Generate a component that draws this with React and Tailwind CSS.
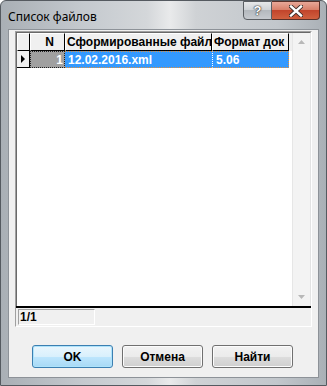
const font = { fontFamily: '"Liberation Sans", Arial, sans-serif' };

const HelpButton = () => (
  <div className="w-[29px] h-[19px] rounded-bl-[4px] border border-[#5a5e63] bg-[linear-gradient(180deg,#e6e8ea_0%,#cfd3d7_45%,#b4b9be_50%,#c6cacf_100%)] flex items-center justify-center">
    <span className="text-[13px] font-bold text-white leading-none [text-shadow:0_0_1px_#333,0_0_1px_#333,0_0_2px_#555]" style={font}>?</span>
  </div>
);

const CloseButton = () => (
  <div className="w-[48px] h-[19px] rounded-br-[4px] border border-l-0 border-[#5a3028] bg-[linear-gradient(180deg,#e8a898_0%,#d9806a_45%,#c2452c_50%,#d0603f_100%)] flex items-center justify-center">
    <svg width="14" height="12" viewBox="0 0 14 12">
      <path d="M2 1.5 L12 10.5 M12 1.5 L2 10.5" stroke="#3a2a26" strokeWidth="4.2" strokeLinecap="square" />
      <path d="M2 1.5 L12 10.5 M12 1.5 L2 10.5" stroke="#ffffff" strokeWidth="2.4" strokeLinecap="square" />
    </svg>
  </div>
);

const Btn = ({ children, primary }) => (
  <div
    className={`w-[81px] h-[23px] rounded-[3px] border flex items-center justify-center text-[12px] font-bold text-black ${
      primary
        ? 'border-[#3c7fb1] bg-[linear-gradient(180deg,#eaf6fd_0%,#d9f0fc_50%,#bee6fd_51%,#a7d9f5_100%)] shadow-[inset_0_0_0_1px_#aee3fb]'
        : 'border-[#707070] bg-[linear-gradient(180deg,#f2f2f2_0%,#ebebeb_50%,#dddddd_51%,#cfcfcf_100%)] shadow-[inset_0_0_0_1px_#fcfcfc]'
    }`}
    style={font}
  >
    {children}
  </div>
);

export default function App() {
  return (
    <div className="w-[327px] h-[386px] bg-white">
      <div className="w-[327px] h-[386px] flex flex-col rounded-t-[6px] border border-[#555a60] bg-[linear-gradient(90deg,#a9afb5_0%,#c4c9ce_25%,#d4d7da_45%,#e9eaeb_52%,#cfd2d5_60%,#c2c7cc_85%,#aab0b6_100%)]">
        <div className="h-[28px] flex items-start justify-between pl-[7px] pr-[6px] shrink-0">
          <div className="pt-[7px] text-[12px] text-black" style={{ fontFamily: '"Noto Sans", sans-serif' }}>Список файлов</div>
          <div className="flex">
            <HelpButton />
            <CloseButton />
          </div>
        </div>
        <div className="flex-1 mx-[7px] mb-[7px] border border-[#8d9298] bg-[#f0f0f0] flex flex-col">
          <div className="ml-[6px] mt-[1px] w-[297px] h-[296px] border-t border-l border-[#a0a0a0] border-r border-b border-r-white border-b-white flex flex-col">
            <div className="flex-1 border-t border-l border-[#696969] border-r border-r-[#e3e3e3] border-b-0 flex bg-white overflow-hidden">
              <div className="flex-1 flex flex-col">
                <div className="flex h-[18px] bg-[#f0f0f0] text-[12px] font-bold text-black" style={font}>
                  <div className="w-[13px] border-r border-b border-black border-t border-l border-t-white border-l-white" />
                  <div className="w-[35px] border-r border-b border-black border-t border-l border-t-white border-l-white flex items-center justify-end pr-[10px]">N</div>
                  <div className="w-[147px] border-r border-b border-black border-t border-l border-t-white border-l-white flex items-center pl-[1px] whitespace-nowrap overflow-hidden">Сформированные файл</div>
                  <div className="w-[77px] border-r border-b border-black border-t border-l border-t-white border-l-white flex items-center pl-[1px] whitespace-nowrap overflow-hidden">Формат док</div>
                </div>
                <div className="flex h-[17px] text-[12px] font-bold" style={font}>
                  <div className="w-[13px] bg-[#f0f0f0] border-r border-b border-black flex items-center justify-center">
                    <svg width="5" height="8" viewBox="0 0 5 8"><path d="M0 0 L4 4 L0 8 Z" fill="#000" /></svg>
                  </div>
                  <div className="w-[35px] bg-[#a0a0a0] border border-dotted border-[#202020] text-white flex items-center justify-end pr-[1px]">1</div>
                  <div className="w-[147px] bg-[#3399ff] border-y border-dotted border-[#e09040] text-white flex items-center pl-[3px] whitespace-nowrap">12.02.2016.xml</div>
                  <div className="w-[77px] bg-[#3399ff] border border-dotted border-[#e09040] border-l-white border-l-solid text-white flex items-center pl-[3px]">5.06</div>
                </div>
                <div className="flex-1 bg-white" />
              </div>
              <div className="w-[18px] bg-[#f3f3f3] border-l border-[#e6e6e6] flex flex-col items-center justify-between py-[7px]">
                <svg width="7" height="4" viewBox="0 0 7 4"><path d="M0 4 L3.5 0 L7 4 Z" fill="#b8b8b8" /></svg>
                <svg width="7" height="4" viewBox="0 0 7 4"><path d="M0 0 L3.5 4 L7 0 Z" fill="#b8b8b8" /></svg>
              </div>
            </div>
            <div className="h-[2px] bg-black" />
            <div className="h-[18px] bg-[#f0f0f0] flex items-center px-[2px]">
              <div className="w-[77px] h-[16px] border border-[#a0a0a0] border-r-white border-b-white bg-[#f0f0f0] text-[12px] font-bold text-black flex items-center pl-[1px]" style={font}>1/1</div>
            </div>
          </div>
          <div className="mt-[18px] ml-[23px] flex gap-[9px]">
            <Btn primary>OK</Btn>
            <Btn>Отмена</Btn>
            <Btn>Найти</Btn>
          </div>
        </div>
      </div>
    </div>
  );
}
